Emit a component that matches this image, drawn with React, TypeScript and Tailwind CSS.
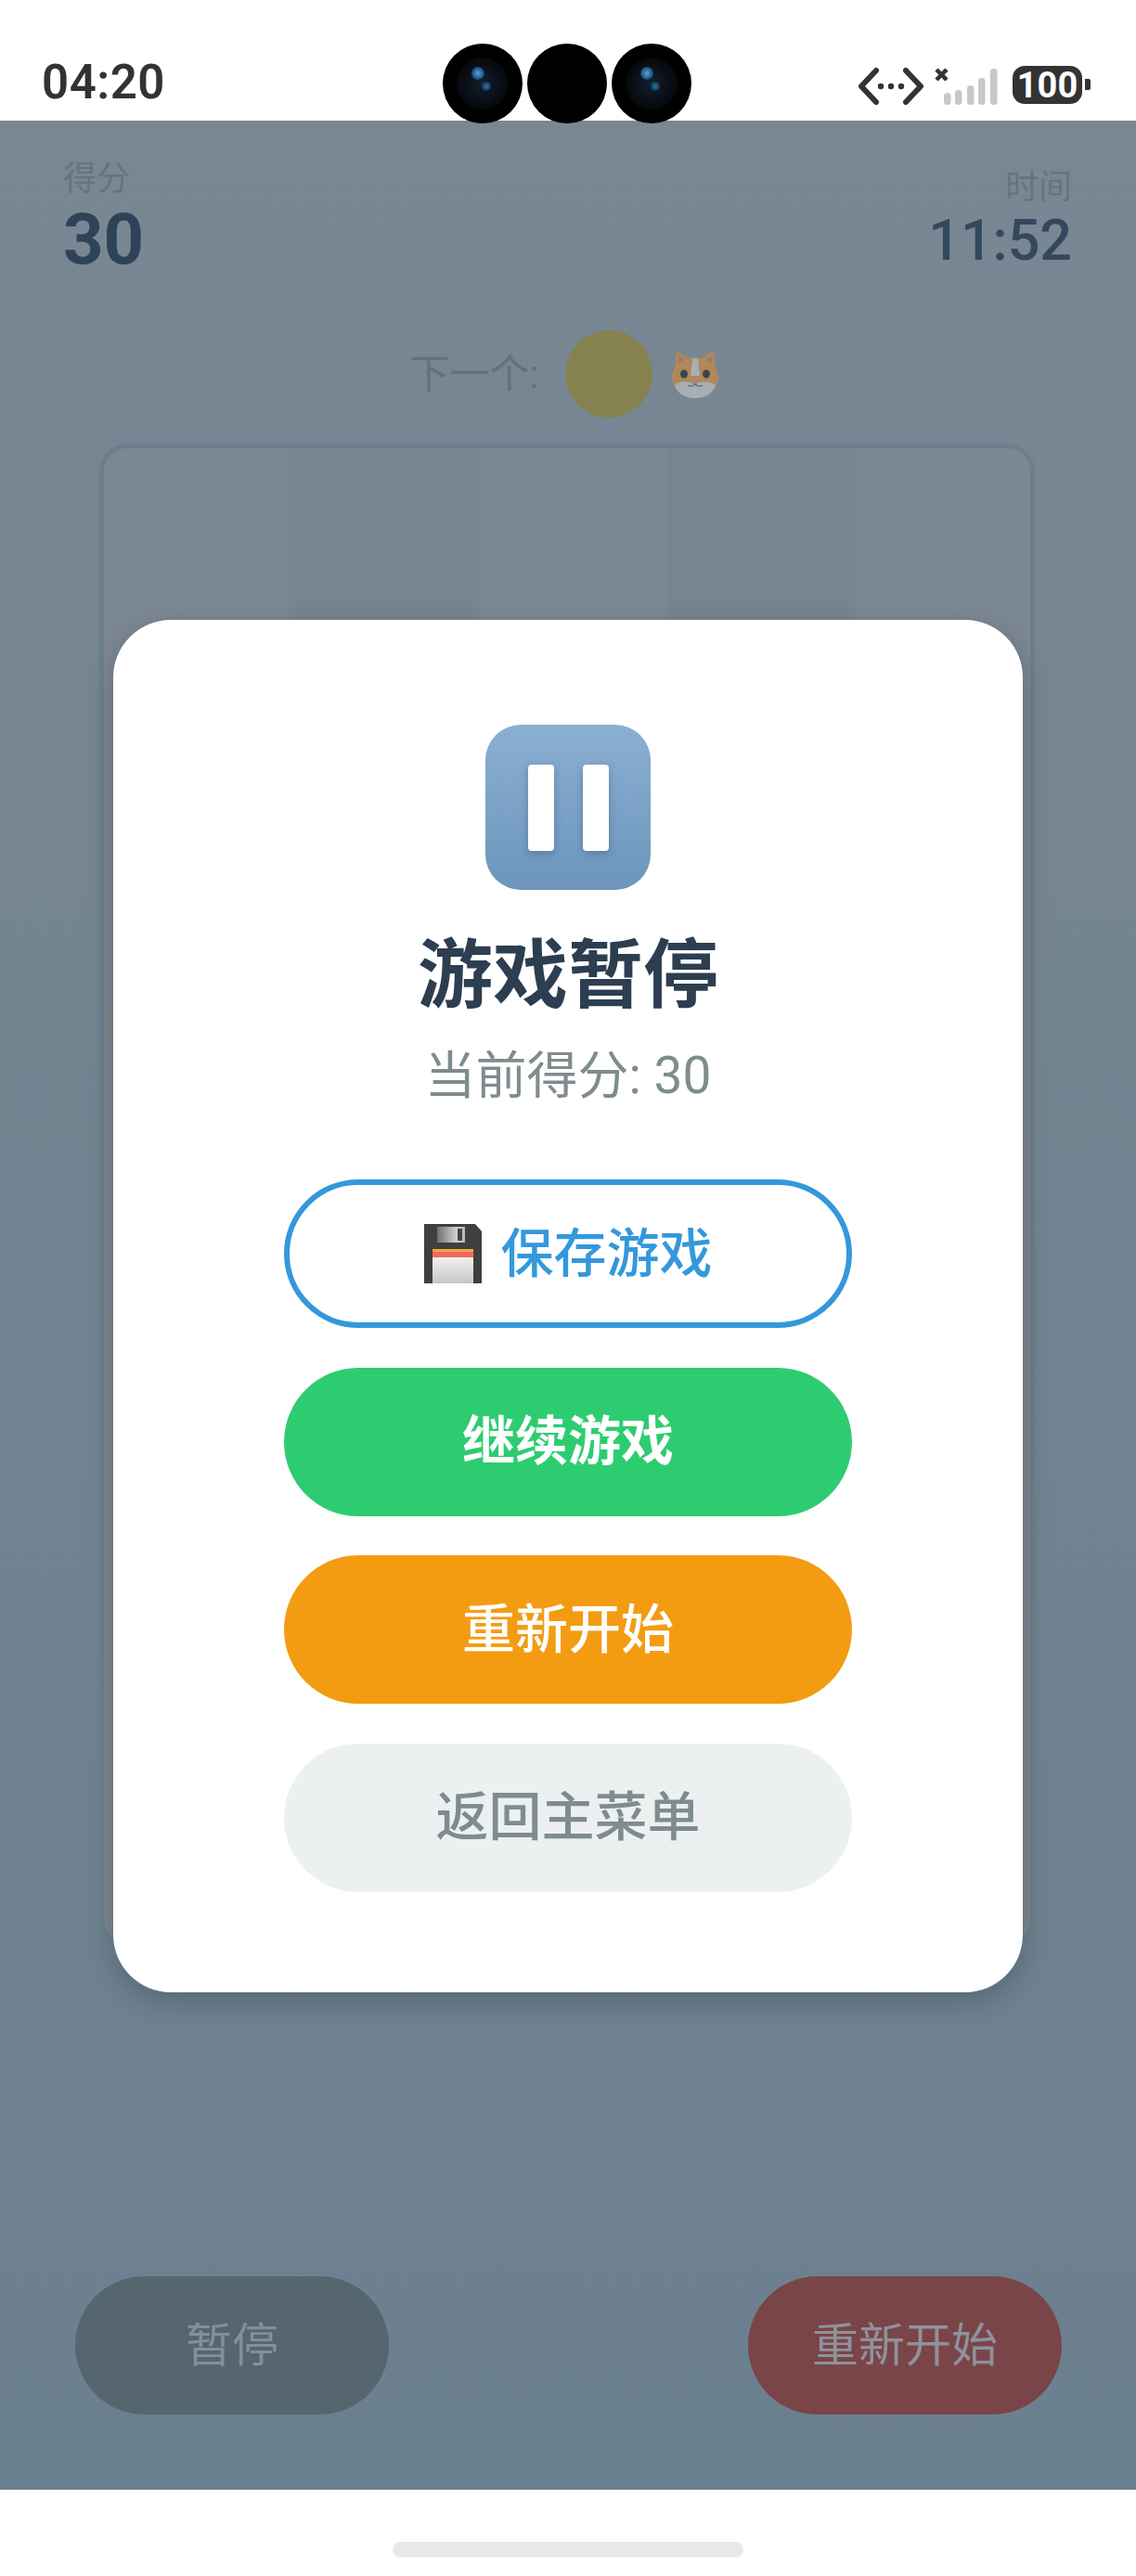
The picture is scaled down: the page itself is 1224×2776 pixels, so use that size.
const cjk = "[font-family:Roboto,'Noto_Sans_CJK_SC',sans-serif]";

function Lens({ glow }: { glow: boolean }) {
  return (
    <div className="relative h-[86px] w-[86px] rounded-full bg-black">
      {glow && (
        <>
          <div className="absolute left-[15px] top-[15px] h-[56px] w-[56px] rounded-full bg-[radial-gradient(circle,#10202f_0%,#090d13_55%,#000_100%)]" />
          <div className="absolute left-[31px] top-[25px] h-[14px] w-[14px] rounded-full bg-[radial-gradient(circle,#5da5d6_0%,#1b5583_60%,transparent_100%)]" />
          <div className="absolute left-[42px] top-[41px] h-[10px] w-[10px] rounded-full bg-[radial-gradient(circle,#34749f_0%,#143f62_60%,transparent_100%)]" />
        </>
      )}
    </div>
  );
}

function StatusIcons() {
  return (
    <div className="flex items-start">
      <svg width="178" height="42" viewBox="0 0 178 42" className="mt-[1px]">
        <g fill="none" stroke="#333" strokeWidth="6" strokeLinecap="round" strokeLinejoin="round">
          <path d="M19 4 L3 21 L19 38" />
          <path d="M51 4 L67 21 L51 38" />
          <path d="M84 3 L95 14 M95 3 L84 14" strokeWidth="4.5" strokeLinecap="butt" />
        </g>
        <circle cx="24" cy="21" r="3.2" fill="#333" />
        <circle cx="35" cy="21" r="3.2" fill="#333" />
        <circle cx="46" cy="21" r="3.2" fill="#333" />
        <g fill="#c8c8c8">
          <rect x="92" y="28" width="7.5" height="13" rx="3.5" />
          <rect x="104" y="25" width="7.5" height="16" rx="3.5" />
          <rect x="117" y="20" width="7.5" height="21" rx="3.5" />
          <rect x="129" y="12" width="7.5" height="29" rx="3.5" />
          <rect x="142" y="2" width="7.5" height="39" rx="3.5" />
        </g>
      </svg>
      <div className="ml-[-12px] flex h-[41px] w-[75px] items-center justify-center rounded-[13px] bg-[#333] text-[38px] font-bold leading-none text-white [font-family:Roboto,sans-serif]">
        100
      </div>
      <div className="ml-[3px] mt-[14px] h-[12px] w-[6px] rounded-r-[2px] bg-[#333]" />
    </div>
  );
}

function CatFace() {
  return (
    <svg width="56" height="54" viewBox="0 0 56 54" className="blur-[0.5px]">
      <path d="M6 24 L7 5 Q8 1 12 3 L24 11 L32 11 L44 3 Q48 1 49 5 L50 24 Z" fill="#ad875e" />
      <path d="M10 18 L11 8 L20 13 Z M46 18 L45 8 L36 13 Z" fill="#8c7a80" />
      <ellipse cx="28" cy="30" rx="25" ry="22" fill="#b0885a" />
      <path d="M25 10 Q28 8 31 10 L33 28 L23 28 Z" fill="#a6afb4" />
      <path d="M6 38 Q16 31 28 37 Q40 31 50 38 Q45 52 28 52 Q11 52 6 38 Z" fill="#a6afb4" />
      <ellipse cx="16" cy="26" rx="4" ry="4.5" fill="#3a474e" />
      <ellipse cx="40" cy="26" rx="4" ry="4.5" fill="#3a474e" />
      <path d="M25 32 L31 32 L28 36 Z" fill="#b27f8e" />
      <path d="M20 38 Q24 41 28 37 Q32 41 36 38" fill="none" stroke="#5f6a70" strokeWidth="1.2" />
    </svg>
  );
}

function FloppyIcon() {
  return (
    <svg width="62" height="64" viewBox="0 0 62 64">
      <defs>
        <linearGradient id="shutter" x1="0" y1="0" x2="1" y2="0">
          <stop offset="0" stopColor="#6f6f6f" />
          <stop offset="0.7" stopColor="#d2d2d2" />
          <stop offset="1" stopColor="#b5b5b5" />
        </linearGradient>
        <linearGradient id="label" x1="0" y1="0" x2="0" y2="1">
          <stop offset="0" stopColor="#ffffff" />
          <stop offset="1" stopColor="#c6c6c6" />
        </linearGradient>
      </defs>
      <path d="M0 0 H55 L62 8 V64 H0 Z" fill="#3f3f3f" />
      <rect x="14" y="3" width="30" height="17" fill="url(#shutter)" />
      <rect x="36" y="5" width="5" height="13" fill="#444" />
      <rect x="9" y="27" width="44" height="37" fill="url(#label)" />
      <rect x="9" y="27" width="44" height="3" fill="#f2a443" />
      <rect x="9" y="30" width="44" height="6" fill="#f06a60" />
    </svg>
  );
}

function PauseIcon() {
  return (
    <div className="flex h-[178px] w-[178px] justify-center gap-[31px] rounded-[38px] bg-linear-to-b from-[#8bafd3] to-[#6d95bb] pt-[43px]">
      <div className="h-[93px] w-[28px] rounded-[4px] bg-white shadow-[0_3px_8px_rgba(40,70,100,0.35)] blur-[0.5px]" />
      <div className="h-[93px] w-[28px] rounded-[4px] bg-white shadow-[0_3px_8px_rgba(40,70,100,0.35)] blur-[0.5px]" />
    </div>
  );
}

const cellTones = Array.from({ length: 40 }, (_, i) => {
  const row = Math.floor(i / 5);
  return (i + row) % 2 === 0;
});

function Board() {
  return (
    <div className="ml-[107px] mt-[28px] grid h-[1620px] w-[1008px] grid-cols-[200px_204px_203px_202px_1fr] grid-rows-8 overflow-hidden rounded-[30px] border-[5px] border-[#6b7f8d]">
      {cellTones.map((light, i) => (
        <div key={i} className={light ? 'bg-[#7b8792]' : 'bg-[#76858f]'} />
      ))}
    </div>
  );
}

function ModalButton({ className, children }: { className: string; children: React.ReactNode }) {
  return (
    <button className={`flex h-[160px] w-[612px] items-center justify-center rounded-full text-[57px] leading-none ${className}`}>
      {children}
    </button>
  );
}

export default function App() {
  return (
    <div className={`flex h-[2776px] w-[1224px] flex-col overflow-hidden bg-white ${cjk}`}>
      <div className="relative z-10 grid h-[130px] grid-cols-3 items-start bg-white pl-[45px] pr-[49px]">
        <div className="mt-[63px] text-[51px] font-semibold leading-[52px] tracking-[0.5px] text-[#333]">04:20</div>
        <div className="ml-[3px] mt-[47px] flex justify-center gap-[5px]">
          <Lens glow />
          <Lens glow={false} />
          <Lens glow />
        </div>
        <div className="mt-[71px] flex justify-end">
          <StatusIcons />
        </div>
      </div>

      <div className="relative flex-1 bg-linear-to-b from-[#798793] to-[#6b808f] pt-[40px]">
        <div className="flex justify-between pl-[68px] pr-[69px]">
          <div>
            <div className="pt-[3px] text-[36px] leading-[40px] text-[#66747f]">得分</div>
            <div className="mt-[7px] text-[76px] font-bold leading-[76px] text-[#2f4358]">30</div>
          </div>
          <div className="pt-[12px] text-right">
            <div className="text-[36px] leading-[40px] text-[#66747f]">时间</div>
            <div className="mt-[7px] text-[61px] font-medium leading-[60px] text-[#33485c]">11:52</div>
          </div>
        </div>

        <div className="mt-[60px] flex items-center justify-center pr-[6px]">
          <span className="text-[43px] leading-[94px] text-[#63717b]">下一个:</span>
          <div className="ml-[28px] h-[94px] w-[94px] rounded-full bg-[#86824f]" />
          <div className="ml-[18px] mt-[2px]">
            <CatFace />
          </div>
        </div>

        <Board />

        <div className="mt-[355px] flex justify-between pl-[81px] pr-[80px] text-[50px] leading-none">
          <button className="flex h-[149px] w-[338px] items-center justify-center rounded-full bg-[#56666f] text-[#838f99]">
            暂停
          </button>
          <button className="flex h-[149px] w-[338px] items-center justify-center rounded-full bg-[#7a4549] text-[#8f929c]">
            重新开始
          </button>
        </div>

        <div className="absolute inset-0 flex items-center justify-center pt-[2px]">
          <div className="flex w-[980px] flex-col items-center rounded-[62px] bg-white pb-[108px] pt-[113px] shadow-[0_10px_30px_rgba(0,0,0,0.2)]">
            <PauseIcon />
            <div className="mt-[48px] text-[81px] font-bold leading-[90px] text-[#2c3e50]">游戏暂停</div>
            <div className="mt-[32px] text-[55px] leading-[60px] text-[#7f8c8d]">当前得分: 30</div>
            <div className="mt-[82px] flex flex-col gap-[42.5px]">
              <ModalButton className="gap-[21px] border-[6px] border-[#3498db] bg-white font-medium text-[#3498db]">
                <FloppyIcon />
                <span>保存游戏</span>
              </ModalButton>
              <ModalButton className="bg-[#2ecc71] font-bold text-white">继续游戏</ModalButton>
              <ModalButton className="bg-[#f39c12] font-medium text-white">重新开始</ModalButton>
              <ModalButton className="bg-[#ecf0f1] font-medium text-[#7f8c8d]">返回主菜单</ModalButton>
            </div>
          </div>
        </div>
      </div>

      <div className="flex h-[93px] justify-center bg-white pt-[56px]">
        <div className="h-[17px] w-[378px] rounded-full bg-[#e8e8e8]" />
      </div>
    </div>
  );
}
